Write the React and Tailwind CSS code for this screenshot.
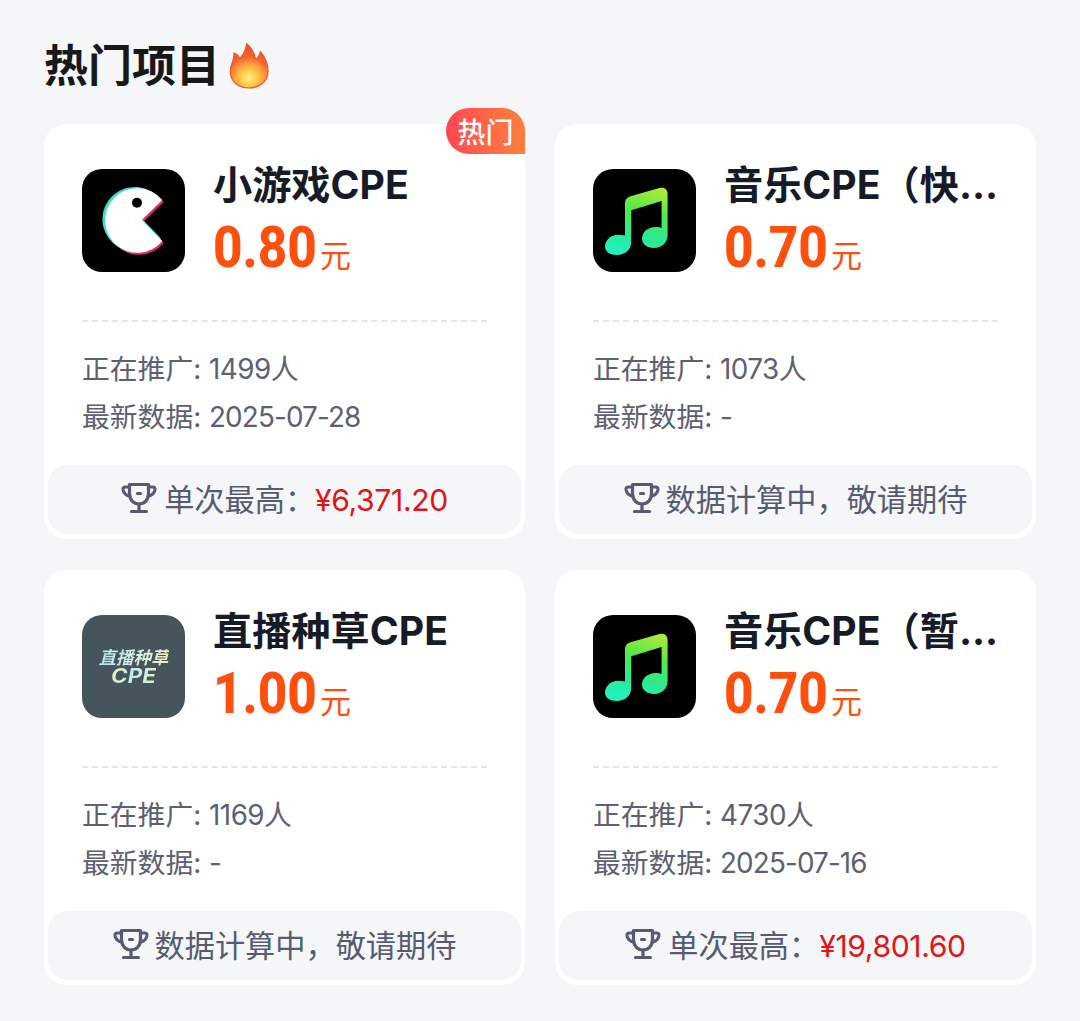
import React from 'react';

const projects = [
  { id: 1, icon: 'game', name: '小游戏CPE', price: '0.80', people: '1499', date: '2025-07-28', max: '¥6,371.20', hot: true },
  { id: 2, icon: 'music', name: '音乐CPE（快...', price: '0.70', people: '1073', date: '-', max: null },
  { id: 3, icon: 'live', name: '直播种草CPE', price: '1.00', people: '1169', date: '-', max: null },
  { id: 4, icon: 'music', name: '音乐CPE（暂...', price: '0.70', people: '4730', date: '2025-07-16', max: '¥19,801.60' },
];

const Fire = () => (
  <svg viewBox="0 0 40 46" className="w-10 h-[46px]">
    <defs>
      <radialGradient id="flame" gradientUnits="userSpaceOnUse" cx="20" cy="35" r="34">
        <stop offset="0" stopColor="#fff08a" />
        <stop offset="0.2" stopColor="#ffd24f" />
        <stop offset="0.42" stopColor="#fda03c" />
        <stop offset="0.62" stopColor="#f8642e" />
        <stop offset="1" stopColor="#ea452c" />
      </radialGradient>
    </defs>
    <path
      d="M17.500 0.700 C21.500 3.500 25 8.500 26.500 16 C29 15 30.600 12 31.300 8.500 C35.500 13.500 39 21 39 28.500 C39 38.500 30.500 45 20 45 C9.500 45 1.200 38.500 1.200 28.500 C1.200 21 6 17 4.800 10 C8 11 9.800 12.500 10.800 15.500 C14.500 11.500 17 6.500 17.500 0.700 Z"
      fill="url(#flame)"
      stroke="#f0562c"
      strokeWidth="1.200"
      strokeLinejoin="round"
    />
  </svg>
);

const Trophy = () => (
  <svg
    viewBox="0 0 36 32"
    className="w-9 h-8 shrink-0 mb-1"
    fill="none"
    stroke="#565b72"
    strokeWidth="3.200"
    strokeLinecap="round"
    strokeLinejoin="round"
  >
    <path d="M8.500 2.500 H27.500 V11.500 C27.500 18 23.500 22 18 22 C12.500 22 8.500 18 8.500 11.500 Z" />
    <path d="M8.500 5 H4.500 C2.600 5 1.800 6.200 2.100 8 C2.700 11 4.800 13.300 8.900 14.300" />
    <path d="M27.500 5 H31.500 C33.400 5 34.200 6.200 33.900 8 C33.300 11 31.200 13.300 27.100 14.300" />
    <path d="M18 22 V29 M10.500 29.500 H25.500 M16.500 11.500 H19.500" />
  </svg>
);

const GameIcon = () => (
  <svg viewBox="0 0 103 103" className="w-[103px] h-[103px] shrink-0">
    <rect width="103" height="103" rx="20" fill="#000" />
    <path d="M59.700 51 L80.300 31 A32.300 32.300 0 1 0 80.300 72 Z" fill="#d62f64" transform="translate(1.500 2)" />
    <path d="M59.700 51 L78 32 A32.300 32.300 0 1 0 78 70 Z" fill="#3fdccd" transform="translate(0.800 -0.800)" />
    <path d="M59.700 51 L80.300 31 A32.300 32.300 0 1 0 80.300 72 Z" fill="#fff" />
    <circle cx="55" cy="33.700" r="5" fill="#000" />
  </svg>
);

const MusicIcon = () => (
  <svg viewBox="0 0 103 103" className="w-[103px] h-[103px] shrink-0">
    <defs>
      <linearGradient id="note" gradientUnits="userSpaceOnUse" x1="62" y1="18" x2="46" y2="86">
        <stop offset="0" stopColor="#b4ea3a" />
        <stop offset="0.35" stopColor="#56ea48" />
        <stop offset="0.7" stopColor="#2ce98c" />
        <stop offset="1" stopColor="#22f0c0" />
      </linearGradient>
    </defs>
    <rect width="103" height="103" rx="20" fill="#000" />
    <path
      d="M32 66.500 V34 C32 30.500 34 28.300 37.500 27.200 L66.500 19 C71.500 17.800 74.600 20.300 74.600 25 V66 C74.600 73 69 79 61 79 C54 79 49 75 49 69.500 C49 63 55 58 62.500 58 C65 58 67 58.300 68.600 59 V32 L38.200 41.300 V73 C38.200 81 31.500 86 24 86 C17 86 12 82.500 12 77.500 C12 71 18 65.700 25 65.700 C27.500 65.700 29.900 65.900 32 66.500 Z"
      fill="url(#note)"
    />
  </svg>
);

const LiveIcon = () => (
  <div className="w-[103px] h-[103px] shrink-0 rounded-[20px] bg-[#46545c] flex flex-col items-center justify-center font-bold italic font-['Inter','Noto_Sans_CJK_SC',sans-serif]">
    <span className="text-[17.500px] leading-[19px] bg-gradient-to-r from-[#b5e8f2] via-[#d3eeea] to-[#e9efb2] bg-clip-text text-transparent">直播种草</span>
    <span className="text-[19.500px] leading-[19px] origin-center scale-x-[1.150] bg-gradient-to-r from-[#e6efb8] via-[#bfe9ee] to-[#e3efc4] bg-clip-text text-transparent">CPE</span>
  </div>
);

const ProjectIcon = ({ type }) => {
  if (type === 'game') return <GameIcon />;
  if (type === 'music') return <MusicIcon />;
  return <LiveIcon />;
};

const ProjectCard = ({ project }) => (
  <div className="relative h-[415px] rounded-[22px] bg-white flex flex-col px-1 pb-[5px]">
    {project.hot && (
      <div className="absolute right-0 -top-4 w-[79px] h-[46px] rounded-[23px] rounded-br-none bg-gradient-to-r from-[#ff4650] to-[#fe7f3c] flex items-center justify-center text-white text-[28px] font-medium leading-none pt-1">
        热门
      </div>
    )}

    <div className="px-[34px] pt-[45px]">
      <div className="flex gap-7 h-[103px]">
        <ProjectIcon type={project.icon} />
        <div className="min-w-0 flex-1">
          <h2 className="-mt-3 h-14 leading-[56px] text-[39.200px] font-bold text-[#171a27] whitespace-nowrap">{project.name}</h2>
          <div className="flex items-baseline h-[60px] mt-[5px] leading-[60px] text-[#fd4f0e]">
            <span className="w-[102px] origin-left scale-x-[0.900] font-['Roboto'] font-extrabold text-[57px]">{project.price}</span>
            <span className="ml-[5px] text-[31px]">元</span>
          </div>
        </div>
      </div>

      <div className="mt-[48px] border-t-2 border-dashed border-[#e3e5e7]" />

      <div className="mt-[23px] text-[27.800px] leading-[48px] text-[#5d6072] whitespace-nowrap">
        <p>正在推广: <span className="tracking-[-0.500px]">{project.people}</span>人</p>
        <p>最新数据: <span className="tracking-[-0.850px]">{project.date}</span></p>
      </div>
    </div>

    <div className="mt-auto h-[69px] rounded-[20px] bg-[#f5f6f8] flex items-center justify-center text-[30.200px] leading-[44px] text-[#565b72] whitespace-nowrap">
      <Trophy />
      {project.max ? (
        <>
          <span className="ml-[7px]">单次最高：</span>
          <span className="text-[#e01518] tracking-[-0.400px]">{project.max}</span>
        </>
      ) : (
        <span className="ml-[6px]">数据计算中，敬请期待</span>
      )}
    </div>
  </div>
);

const App = () => {
  return (
    <div className="w-full min-h-[1021px] bg-[#f5f6f8] px-11 pt-[43px] font-['Inter','Noto_Sans_CJK_SC',sans-serif]">
      <div className="flex items-center h-[46px] gap-[9px]">
        <h1 className="text-[44px] leading-[64px] font-bold text-[#17181a]">热门项目</h1>
        <Fire />
      </div>

      <div className="mt-[35px] grid grid-cols-2 gap-x-[30px] gap-y-[31px]">
        {projects.map((project) => (
          <ProjectCard key={project.id} project={project} />
        ))}
      </div>
    </div>
  );
};

export default App;
